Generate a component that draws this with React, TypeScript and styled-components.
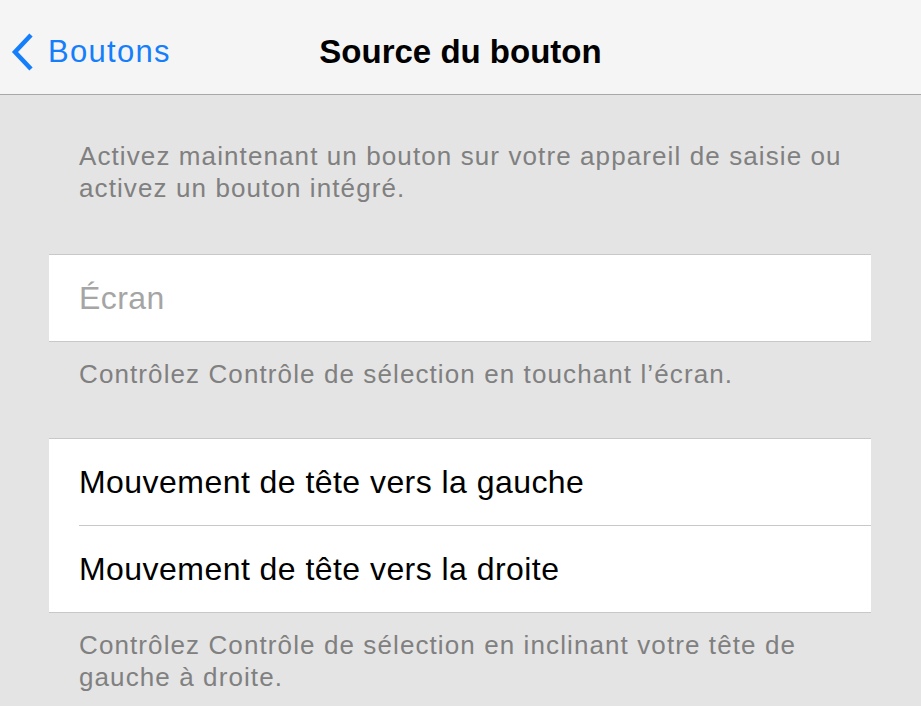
import styled, { createGlobalStyle } from 'styled-components';

const GlobalStyle = createGlobalStyle`
    html, body {
        margin: 0;
        padding: 0;
        background: #e4e4e4;
        font-family: 'Liberation Sans', Arial, sans-serif;
        -webkit-font-smoothing: antialiased;
    }
`;

const Page = styled.div`
    width: 921px;
    height: 706px;
    overflow: hidden;
    background: #e4e4e4;
`;

const NavBar = styled.header`
    position: relative;
    height: 95px;
    box-sizing: border-box;
    padding-top: 10px;
    display: flex;
    align-items: center;
    justify-content: center;
    background: #f5f5f5;
    border-bottom: 1px solid #a7a7a7;
`;

const BackButton = styled.div`
    position: absolute;
    left: 10px;
    top: 10px;
    bottom: 0;
    display: flex;
    align-items: center;
    gap: 14px;
    color: #157efb;
    font-size: 31px;
    letter-spacing: 1.3px;
`;

const NavTitle = styled.h1`
    margin: 0;
    font-size: 33px;
    font-weight: 600;
    color: #000;
`;

const Content = styled.main`
    padding: 45px 50px 0 49px;
`;

const Note = styled.p<{ $top?: number }>`
    margin: ${(p) => p.$top ?? 0}px 0 0;
    padding-left: 30px;
    font-size: 26px;
    letter-spacing: 1.1px;
    line-height: 32px;
    color: #808080;
`;

const Group = styled.section<{ $top: number }>`
    margin-top: ${(p) => p.$top}px;
    background: #fff;
    border-top: 1px solid #c8c8c8;
    border-bottom: 1px solid #c8c8c8;
`;

const Row = styled.div<{ $muted?: boolean }>`
    height: 86px;
    margin-left: 30px;
    display: flex;
    align-items: center;
    font-size: 32px;
    letter-spacing: 0.45px;
    color: ${(p) => (p.$muted ? '#a5a5a5' : '#000')};
    & + & {
        border-top: 1px solid #c8c8c8;
    }
`;

const Chevron = () => (
    <svg width="24" height="40" viewBox="0 0 24 40">
        <path d="M21 3 L5 20 L21 37" fill="none" stroke="#157efb" strokeWidth="4.5" />
    </svg>
);

export default function App() {
    return (
        <Page>
            <GlobalStyle />
            <NavBar>
                <BackButton>
                    <Chevron />
                    Boutons
                </BackButton>
                <NavTitle>Source du bouton</NavTitle>
            </NavBar>
            <Content>
                <Note>
                    Activez maintenant un bouton sur votre appareil de saisie ou
                    <br />
                    activez un bouton intégré.
                </Note>
                <Group $top={50}>
                    <Row $muted>Écran</Row>
                </Group>
                <Note $top={16}>Contrôlez Contrôle de sélection en touchant l’écran.</Note>
                <Group $top={48}>
                    <Row>Mouvement de tête vers la gauche</Row>
                    <Row>Mouvement de tête vers la droite</Row>
                </Group>
                <Note $top={16}>
                    Contrôlez Contrôle de sélection en inclinant votre tête de
                    <br />
                    gauche à droite.
                </Note>
            </Content>
        </Page>
    );
}
